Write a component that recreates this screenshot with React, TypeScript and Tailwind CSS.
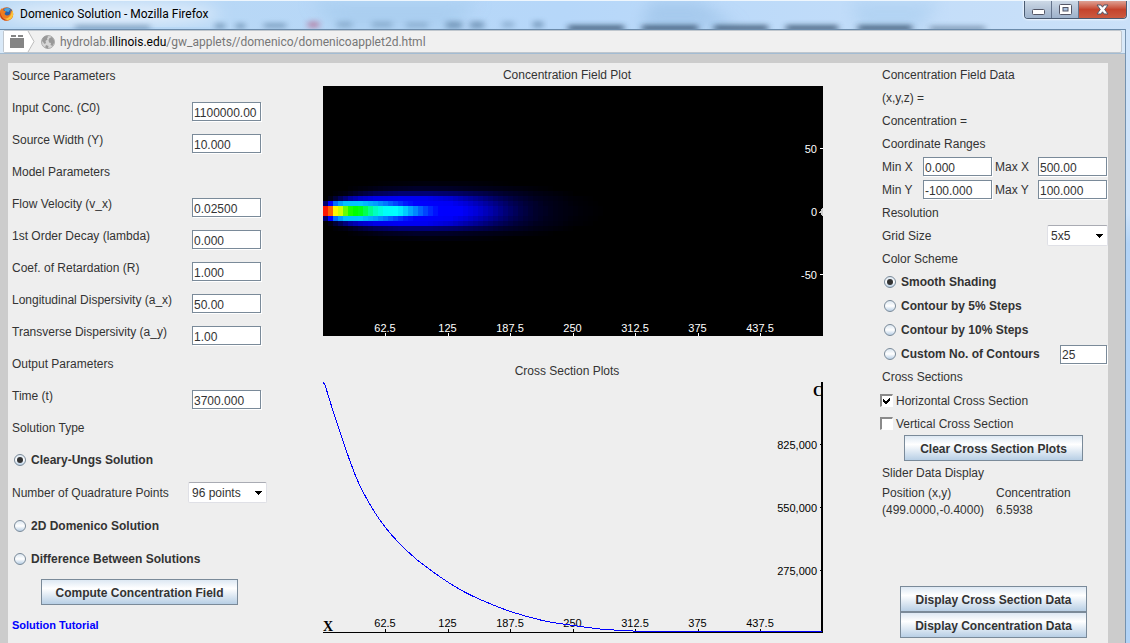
import type { ReactNode } from 'react';

const modelRows = [
  { id: 'source', label: 'Source Parameters' },
  { id: 'c0', label: 'Input Conc. (C0)', value: '1100000.00' },
  { id: 'width', label: 'Source Width (Y)', value: '10.000' },
  { id: 'model', label: 'Model Parameters' },
  { id: 'velocity', label: 'Flow Velocity (v_x)', value: '0.02500' },
  { id: 'decay', label: '1st Order Decay (lambda)', value: '0.000' },
  { id: 'retardation', label: 'Coef. of Retardation (R)', value: '1.000' },
  { id: 'ax', label: 'Longitudinal Dispersivity (a_x)', value: '50.00' },
  { id: 'ay', label: 'Transverse Dispersivity (a_y)', value: '1.00' },
  { id: 'output', label: 'Output Parameters' },
  { id: 'time', label: 'Time (t)', value: '3700.000' },
];

const xTicks = ['62.5', '125', '187.5', '250', '312.5', '375', '437.5'];

// [column, level] knots for each row of cells, counted outwards from the centre line.
// Level runs 0 black, 255 blue, 510 cyan, 765 green, 1020 yellow, 1275 red.
const plume: number[][][] = [
  [
    [0, 1251], [1, 1176], [2, 1028], [3, 973], [4, 869], [5, 789], [6, 765], [7, 741], [8, 685],
    [9, 621], [10, 573], [11, 541], [12, 517], [14, 510], [15, 491], [16, 459], [17, 423],
    [18, 391], [19, 355], [20, 323], [21, 295], [22, 271], [23, 255], [27, 252], [30, 218],
    [33, 172], [36, 118], [39, 74], [42, 43], [46, 22], [51, 8], [56, 0],
  ],
  [
    [0, 110], [1, 255], [2, 365], [3, 415], [4, 450], [7, 455], [8, 440], [10, 415], [12, 375],
    [14, 327], [16, 280], [18, 255], [25, 245], [28, 216], [31, 176], [34, 132], [37, 88],
    [40, 56], [44, 28], [50, 8], [55, 0],
  ],
  [[0, 0], [1, 20], [3, 90], [5, 160], [7, 200], [10, 232], [15, 245], [20, 240], [25, 208], [30, 148], [34, 98], [38, 58], [42, 31], [49, 8], [54, 0]],
  [[1, 0], [4, 18], [7, 56], [10, 88], [15, 114], [21, 116], [26, 102], [31, 75], [36, 44], [42, 20], [50, 0]],
  [[4, 0], [8, 14], [12, 30], [18, 42], [24, 40], [30, 28], [36, 18], [46, 0]],
  [[8, 0], [14, 7], [20, 13], [28, 11], [38, 0]],
];

// concentration along the horizontal section, in plot pixels
const section = [
  [0, 0], [2, 4], [5, 14], [12, 36], [20, 60], [27, 80], [34, 98], [42, 114], [52, 131], [62, 145],
  [75, 160], [92, 176], [109, 189], [125, 200], [142, 210], [159, 218], [187, 229], [219, 238],
  [250, 243], [282, 247], [325, 249], [400, 249], [498, 249],
];

function levelAt(knots: number[][], col: number) {
  if (col < knots[0][0]) return 0;
  for (let i = 1; i < knots.length; i++) {
    const [x0, v0] = knots[i - 1];
    const [x1, v1] = knots[i];
    if (col <= x1) return v0 + ((v1 - v0) * (col - x0)) / (x1 - x0);
  }
  return 0;
}

function shade(level: number) {
  const v = Math.round(level);
  if (v <= 255) return `rgb(0,0,${v})`;
  if (v <= 510) return `rgb(0,${v - 255},255)`;
  if (v <= 765) return `rgb(0,255,${765 - v})`;
  if (v <= 1020) return `rgb(${v - 765},255,0)`;
  return `rgb(255,${1275 - v},0)`;
}

// Catmull-Rom spline through the points
function smoothPath(points: number[][]) {
  let d = `M${points[0][0]} ${points[0][1]}`;
  for (let i = 0; i < points.length - 1; i++) {
    const p0 = points[Math.max(i - 1, 0)];
    const p1 = points[i];
    const p2 = points[i + 1];
    const p3 = points[Math.min(i + 2, points.length - 1)];
    d += `C${p1[0] + (p2[0] - p0[0]) / 6} ${p1[1] + (p2[1] - p0[1]) / 6} ${p2[0] - (p3[0] - p1[0]) / 6} ${p2[1] - (p3[1] - p1[1]) / 6} ${p2[0]} ${p2[1]}`;
  }
  return d;
}

const cells = plume.flatMap((knots, row) =>
  Array.from({ length: 57 }, (_, col) => ({ row, col, level: levelAt(knots, col) })).filter(
    (cell) => cell.level >= 1,
  ),
);

function FieldPlot() {
  return (
    <svg viewBox="0 0 500 250" className="block w-full bg-black" role="img" aria-label="Concentration field">
      <g shapeRendering="crispEdges">
        {cells.map(({ row, col, level }) => (
          <g key={`${row}-${col}`} fill={shade(level)}>
            <rect x={col * 5} y={120 - row * 5} width={5} height={5} />
            <rect x={col * 5} y={125 + row * 5} width={5} height={5} />
          </g>
        ))}
      </g>
      <g className="fill-white font-['Liberation_Sans',sans-serif] text-[11px]">
        {xTicks.map((tick, i) => (
          <g key={tick}>
            <text x={62 + i * 62.5} y={246} textAnchor="middle">{tick}</text>
            <rect x={Math.floor(62.5 * (i + 1))} y={247} width={1} height={3} />
          </g>
        ))}
        {['50', '0', '-50'].map((tick, i) => (
          <g key={tick}>
            <text x={494} y={67 + i * 63} textAnchor="end">{tick}</text>
            <rect x={497} y={62 + i * 63} width={3} height={1} />
          </g>
        ))}
      </g>
      {/* slider handle */}
      <path d="M496 126h1v-1h1v-2h1v-1h1v8h-1v-1h-1v-2h-2z" fill="#d0d0d0" shapeRendering="crispEdges" />
    </svg>
  );
}

function CrossPlot() {
  return (
    <svg viewBox="0 0 500 252" className="block w-full" role="img" aria-label="Horizontal cross section">
      <g shapeRendering="crispEdges">
        <rect x={498} y={0} width={2} height={251} />
        <rect x={0} y={250} width={500} height={1} />
      </g>
      <g className="font-['Liberation_Sans',sans-serif] text-[11px]">
        {xTicks.map((tick, i) => (
          <g key={tick}>
            <text x={62 + i * 62.5} y={245} textAnchor="middle">{tick}</text>
            <rect x={Math.floor(62.5 * (i + 1))} y={247} width={1} height={3} />
          </g>
        ))}
        {['825,000', '550,000', '275,000'].map((tick, i) => (
          <g key={tick}>
            <text x={494} y={67 + i * 63} textAnchor="end">{tick}</text>
            <rect x={497} y={62 + i * 63} width={2} height={1} />
          </g>
        ))}
      </g>
      <g className="font-['Liberation_Serif',serif] text-[14px] font-bold">
        <text x={0} y={249}>X</text>
        <text x={490} y={14}>C</text>
      </g>
      <path
        d={smoothPath(section)}
        transform="translate(.5 .5)"
        fill="none"
        stroke="#0000ff"
        shapeRendering="crispEdges"
      />
    </svg>
  );
}

function Field({ id, value, className = 'w-[69px]', label }: { id: string; value: string; className?: string; label?: string }) {
  return (
    <input
      id={id}
      aria-label={label}
      defaultValue={value}
      className={`h-[19px] border border-[#7a8a99] bg-white pl-px pt-[2px] text-[12px] leading-4 shadow-[1px_1px_0_#fff] outline-none ${className}`}
    />
  );
}

function Select({ id, value, className }: { id: string; value: string; className: string }) {
  return (
    <div className={`relative ${className}`}>
      <select
        id={id}
        defaultValue={value}
        className="block h-[21px] w-full appearance-none rounded-[2px] border border-[#dfe0e6] border-t-[#a9abb3] bg-white pl-[3px] text-[12px] leading-4 outline-none"
      >
        <option>{value}</option>
      </select>
      <svg viewBox="0 0 7 4" className="pointer-events-none absolute right-[5px] top-[9px] h-1 w-[7px]">
        <path d="M0 0h7v1h-1v1h-1v1h-1v1h-1v-1h-1v-1h-1v-1h-1z" shapeRendering="crispEdges" />
      </svg>
    </div>
  );
}

function Radio({ name, children, checked }: { name: string; children: ReactNode; checked?: boolean }) {
  return (
    <label className="flex items-center gap-[5px] pl-[2px] font-bold">
      <span className="relative h-3 w-3">
        <input
          type="radio"
          name={name}
          defaultChecked={checked}
          className="peer block h-3 w-3 appearance-none rounded-full border border-[#7a8a99] bg-linear-to-b from-[#dce7f1] via-[#ffffff] to-[#b8cfe5]"
        />
        <span className="pointer-events-none absolute left-[3px] top-[3px] hidden h-[6px] w-[6px] rounded-full bg-[#333] peer-checked:block" />
      </span>
      {children}
    </label>
  );
}

function Check({ children, checked }: { children: ReactNode; checked?: boolean }) {
  return (
    <label className="-ml-[2px] flex h-[23px] items-center gap-[3px]">
      <span className="relative h-[13px] w-[13px]">
        <input
          type="checkbox"
          defaultChecked={checked}
          className="peer block h-[13px] w-[13px] appearance-none border-2 border-b border-r border-[#8a8a8a] border-b-white border-r-white bg-white"
        />
        <svg viewBox="0 0 7 7" className="pointer-events-none absolute left-[3px] top-[3px] hidden h-[7px] w-[7px] peer-checked:block">
          <path d="M0 2v3l2 2h1l4-4v-3l-4 4h-1z" shapeRendering="crispEdges" />
        </svg>
      </span>
      {children}
    </label>
  );
}

function Button({ children, className = '' }: { children: ReactNode; className?: string }) {
  return (
    <button
      className={`h-[26px] border border-[#7a8a99] bg-linear-to-b from-[#dde8f3] via-[#ffffff] via-35% to-[#b8cfe5] pt-px text-[12px] font-bold leading-4 ${className}`}
    >
      {children}
    </button>
  );
}

function TitleBar() {
  return (
    <header className="relative flex h-[29px] items-start justify-between overflow-hidden border-t border-[#eef6fd] bg-linear-to-r from-[#b9d8f4] via-[#b6d7f9] to-[#cbe1f9]">
      {/* glass reflections of the window behind */}
      <svg className="absolute inset-0 h-full w-full" viewBox="0 0 1130 29" preserveAspectRatio="none" aria-hidden="true">
        <defs>
          <filter id="soft" x="-50%" y="-150%" width="200%" height="400%"><feGaussianBlur stdDeviation="3" /></filter>
          <filter id="haze"><feGaussianBlur stdDeviation="8" /></filter>
        </defs>
        <ellipse cx="110" cy="13" rx="110" ry="11" fill="#e4effb" filter="url(#haze)" />
        <path d="M310 0h170l-30 29h-110z" fill="#a5cbed" opacity=".7" filter="url(#haze)" />
        <path d="M650 0h50l40 29h-100z" fill="#9dc3e8" opacity=".7" filter="url(#haze)" />
        <path d="M850 0h90l-20 29h-60z" fill="#a8cdef" opacity=".6" filter="url(#haze)" />
        <g fill="#4f7396" opacity=".55">
          <rect x="75" y="25" width="75" height="5" filter="url(#soft)" />
          <rect x="215" y="23" width="10" height="6" filter="url(#soft)" />
          <rect x="236" y="23" width="9" height="6" filter="url(#soft)" />
          <rect x="264" y="23" width="22" height="5" filter="url(#soft)" />
          <rect x="337" y="21" width="15" height="7" opacity=".6" filter="url(#soft)" />
          <rect x="372" y="21" width="20" height="7" opacity=".6" filter="url(#soft)" />
          <rect x="406" y="22" width="22" height="6" opacity=".6" filter="url(#soft)" />
          <rect x="446" y="21" width="16" height="8" filter="url(#soft)" />
          <rect x="470" y="21" width="14" height="8" filter="url(#soft)" />
          <rect x="502" y="21" width="12" height="7" opacity=".6" filter="url(#soft)" />
          <rect x="533" y="21" width="10" height="7" filter="url(#soft)" />
        </g>
        <rect x="308" y="21" width="11" height="7" fill="#b35c83" opacity=".6" filter="url(#soft)" />
        <g fill="#27435f" opacity=".75">
          <rect x="568" y="25" width="56" height="6" filter="url(#soft)" />
          <rect x="642" y="25" width="56" height="6" filter="url(#soft)" />
          <rect x="714" y="25" width="54" height="6" filter="url(#soft)" />
          <rect x="786" y="25" width="52" height="6" filter="url(#soft)" />
          <rect x="858" y="25" width="54" height="6" filter="url(#soft)" />
          <rect x="930" y="26" width="55" height="5" opacity=".6" filter="url(#soft)" />
        </g>
      </svg>
      <div className="relative flex h-[26px] items-center gap-[6px]">
        <svg viewBox="0 0 14 14" className="h-[14px] w-[14px]" aria-hidden="true">
          <circle cx="6.5" cy="7" r="6.8" fill="#e4691b" />
          <circle cx="7.5" cy="5.6" r="4.9" fill="#285fa8" />
          <path d="M4 2C6 .7 9 .8 10.500 2L8.500 5L5 4z" fill="#4fa3dc" />
          <path d="M0 4C1 2 1.500 1.500 2 1L3 3L6 4.500L5 6C4 7 5 8.500 7 8.500C10 8.500 11 6 10.500 3C13.500 5 14 9 11 12C8 14.500 3 14 1 11C-.2 9 -.5 6 0 4z" fill="#ef7d20" />
          <path d="M12 3C14 6 13.500 10 10.500 12C8 13.500 5 13 3.500 11.500C7 12.500 11.500 10 12 3z" fill="#fbc63c" />
          <path d="M0 5L1 8C2 11 4 12.500 7 13C4 14 0 12 0 5z" fill="#b93220" />
        </svg>
        <h1 className="font-[Roboto,'Open_Sans',sans-serif] text-[12px] leading-4 text-black">
          Domenico Solution - Mozilla Firefox
        </h1>
      </div>
      <div className="relative mr-[3px] flex h-[18px] overflow-hidden rounded-b-[4px] border border-t-0 border-[#4a5b72] shadow-[0_0_2px_1px_#ffffffb0]">
        <button aria-label="Minimize" className="grid w-[27px] place-items-center border-r border-[#64748c] bg-linear-to-b from-[#ccd8e6] via-[#b6c5d8] via-45% to-[#9db2cb]">
          <svg viewBox="0 0 13 6" className="mt-1 h-[6px] w-[13px]">
            <rect x=".5" y=".5" width="12" height="5" rx="1" fill="#fff" stroke="#535666" />
          </svg>
        </button>
        <button aria-label="Maximize" className="grid w-[27px] place-items-center border-r border-[#64748c] bg-linear-to-b from-[#ccd8e6] via-[#b6c5d8] via-45% to-[#9db2cb]">
          <svg viewBox="0 0 13 11" className="h-[11px] w-[13px]">
            <rect x=".5" y=".5" width="12" height="10" rx="1" fill="#fff" stroke="#535666" />
            <rect x="4" y="3.500" width="5" height="3.500" fill="#a9c1df" stroke="#535666" />
          </svg>
        </button>
        <button aria-label="Close" className="grid w-[47px] place-items-center bg-linear-to-b from-[#dda093] via-[#c5432c] via-50% to-[#cc5a40]">
          <svg viewBox="0 0 13 11" className="h-[11px] w-[13px]">
            <path d="M1 1h4l1.500 2.200l1.500-2.200h4l-3.300 4.500l3.300 4.500h-4l-1.500-2.200l-1.500 2.200h-4l3.300-4.500z" fill="#fff" stroke="#535666" />
          </svg>
        </button>
      </div>
    </header>
  );
}

function AddressBar() {
  return (
    <div className="flex h-[25px] border-b border-t border-[#a3bcd3] border-t-[#6b8bab] bg-[#d9e9f8] pl-[3px] pr-[3px]">
      <div className="flex flex-1 items-center rounded-[2px] border border-[#c0c7ce] bg-[#f0f0f0] font-[Roboto,'Open_Sans',sans-serif] text-[12px] leading-4 text-[#777]">
        <svg viewBox="0 0 31 21" className="h-[21px] w-[31px] shrink-0" aria-hidden="true">
          <path d="M0 0h24l6 10.500l-6 10.500h-24z" fill="#fff" />
          <path d="M24 0l6 10.500l-6 10.500" fill="none" stroke="#bcbcbc" />
          <path d="M7 4h5v2h-5zM14 4h5v2h-5zM6 7h14v10h-14z" fill="#858585" shapeRendering="crispEdges" />
        </svg>
        <svg viewBox="0 0 14 14" className="ml-[6px] mr-[5px] h-[14px] w-[14px] shrink-0" aria-hidden="true">
          <circle cx="7" cy="7" r="6.500" fill="#d6d6d6" stroke="#aaa" />
          <path d="M1 6C1 3 3 1 6 .800L7.500 2L6 3L6.500 4.500L4.500 6L5 8L3.500 9L2 7zM8.500 3L11 2L13 5V8L11.500 11L9.500 10L10 8L8 7.500L7.500 5zM5 10L7.500 11L7 13.400L4 12.500z" fill="#999" />
        </svg>
        <span>
          hydrolab.<span className="text-black">illinois.edu</span>/gw_applets//domenico/domenicoapplet2d.html
        </span>
      </div>
    </div>
  );
}

export default function App() {
  return (
    <div className="flex min-h-screen flex-col bg-[#b4d4f5] font-['Liberation_Sans',Arial,sans-serif] text-[12px] leading-4 text-[#333]">
      <TitleBar />
      <div className="flex flex-1 bg-linear-to-b from-[#cfe4fa] from-30% to-[#b2d3f6] to-35% pr-1">
        <div className="flex flex-1 flex-col border-r border-[#7592ae] bg-[#ccc]">
          <AddressBar />
          <main className="ml-2 mr-[17px] mt-[9px] flex flex-1 items-start bg-[#eee]">
            {/* Parameters */}
            <form className="w-[315px] shrink-0 pl-1 pt-[5px]">
              {modelRows.map((row) => (
                <div key={row.id} className="flex h-8 items-start">
                  {row.value ? (
                    <>
                      <label htmlFor={row.id} className="w-[180px]">{row.label}</label>
                      <div className="pt-[2px]">
                        <Field id={row.id} value={row.value} />
                      </div>
                    </>
                  ) : (
                    <h2>{row.label}</h2>
                  )}
                </div>
              ))}
              <h2 className="h-[23px]">Solution Type</h2>
              <div className="grid auto-rows-[33px] items-center">
                <Radio name="solution" checked>Cleary-Ungs Solution</Radio>
                <div className="flex items-center">
                  <label htmlFor="quadrature" className="w-[176px]">Number of Quadrature Points</label>
                  <Select id="quadrature" value="96 points" className="w-[79px]" />
                </div>
                <Radio name="solution">2D Domenico Solution</Radio>
                <Radio name="solution">Difference Between Solutions</Radio>
              </div>
              <Button className="ml-[29px] mt-1 w-[197px]">Compute Concentration Field</Button>
              <a href="#tutorial" className="mt-3 block text-[11px] font-bold text-[#0000ff]">Solution Tutorial</a>
            </form>

            {/* Plots */}
            <section className="min-w-0 flex-1 pt-1">
              <h2 className="mb-[3px] pr-3 text-center">Concentration Field Plot</h2>
              <FieldPlot />
              <h2 className="mb-[3px] mt-[27px] pr-3 text-center">Cross Section Plots</h2>
              <CrossPlot />
            </section>

            {/* Display options */}
            <form className="ml-[59px] w-[226px] shrink-0">
              <div className="grid auto-rows-[23px] items-center">
                <h2>Concentration Field Data</h2>
                <p>(x,y,z) =</p>
                <p>Concentration =</p>
                <h2>Coordinate Ranges</h2>
                {['X', 'Y'].map((axis) => (
                  <div key={axis} className="flex items-center">
                    <label htmlFor={`min${axis}`} className="w-[41px]">Min {axis}</label>
                    <Field id={`min${axis}`} value={axis === 'X' ? '0.000' : '-100.000'} />
                    <label htmlFor={`max${axis}`} className="ml-[3px] w-[43px]">Max {axis}</label>
                    <Field id={`max${axis}`} value={axis === 'X' ? '500.00' : '100.000'} />
                  </div>
                ))}
                <h2>Resolution</h2>
                <div className="flex items-center justify-between">
                  <label htmlFor="grid">Grid Size</label>
                  <Select id="grid" value="5x5" className="w-[61px]" />
                </div>
                <h2>Color Scheme</h2>
              </div>
              <div className="grid auto-rows-[24px] items-center">
                <Radio name="scheme" checked>Smooth Shading</Radio>
                <Radio name="scheme">Contour by 5% Steps</Radio>
                <Radio name="scheme">Contour by 10% Steps</Radio>
                <div className="flex items-center justify-between pr-px">
                  <Radio name="scheme">Custom No. of Contours</Radio>
                  <Field id="contours" label="Number of contours" value="25" className="w-[47px]" />
                </div>
              </div>
              <h2 className="leading-[23px]">Cross Sections</h2>
              <Check checked>Horizontal Cross Section</Check>
              <Check>Vertical Cross Section</Check>
              <Button className="ml-[22px] w-[179px]">Clear Cross Section Plots</Button>
              <h2 className="mt-1">Slider Data Display</h2>
              <dl className="mt-1 grid grid-cols-[114px_1fr] leading-[17px]">
                <div>
                  <dt>Position (x,y)</dt>
                  <dd>(499.0000,-0.4000)</dd>
                </div>
                <div>
                  <dt>Concentration</dt>
                  <dd>6.5938</dd>
                </div>
              </dl>
              <div className="ml-[18px] mt-[67px] flex w-[187px] flex-col">
                <Button>Display Cross Section Data</Button>
                <Button>Display Concentration Data</Button>
              </div>
            </form>
          </main>
        </div>
      </div>
    </div>
  );
}
